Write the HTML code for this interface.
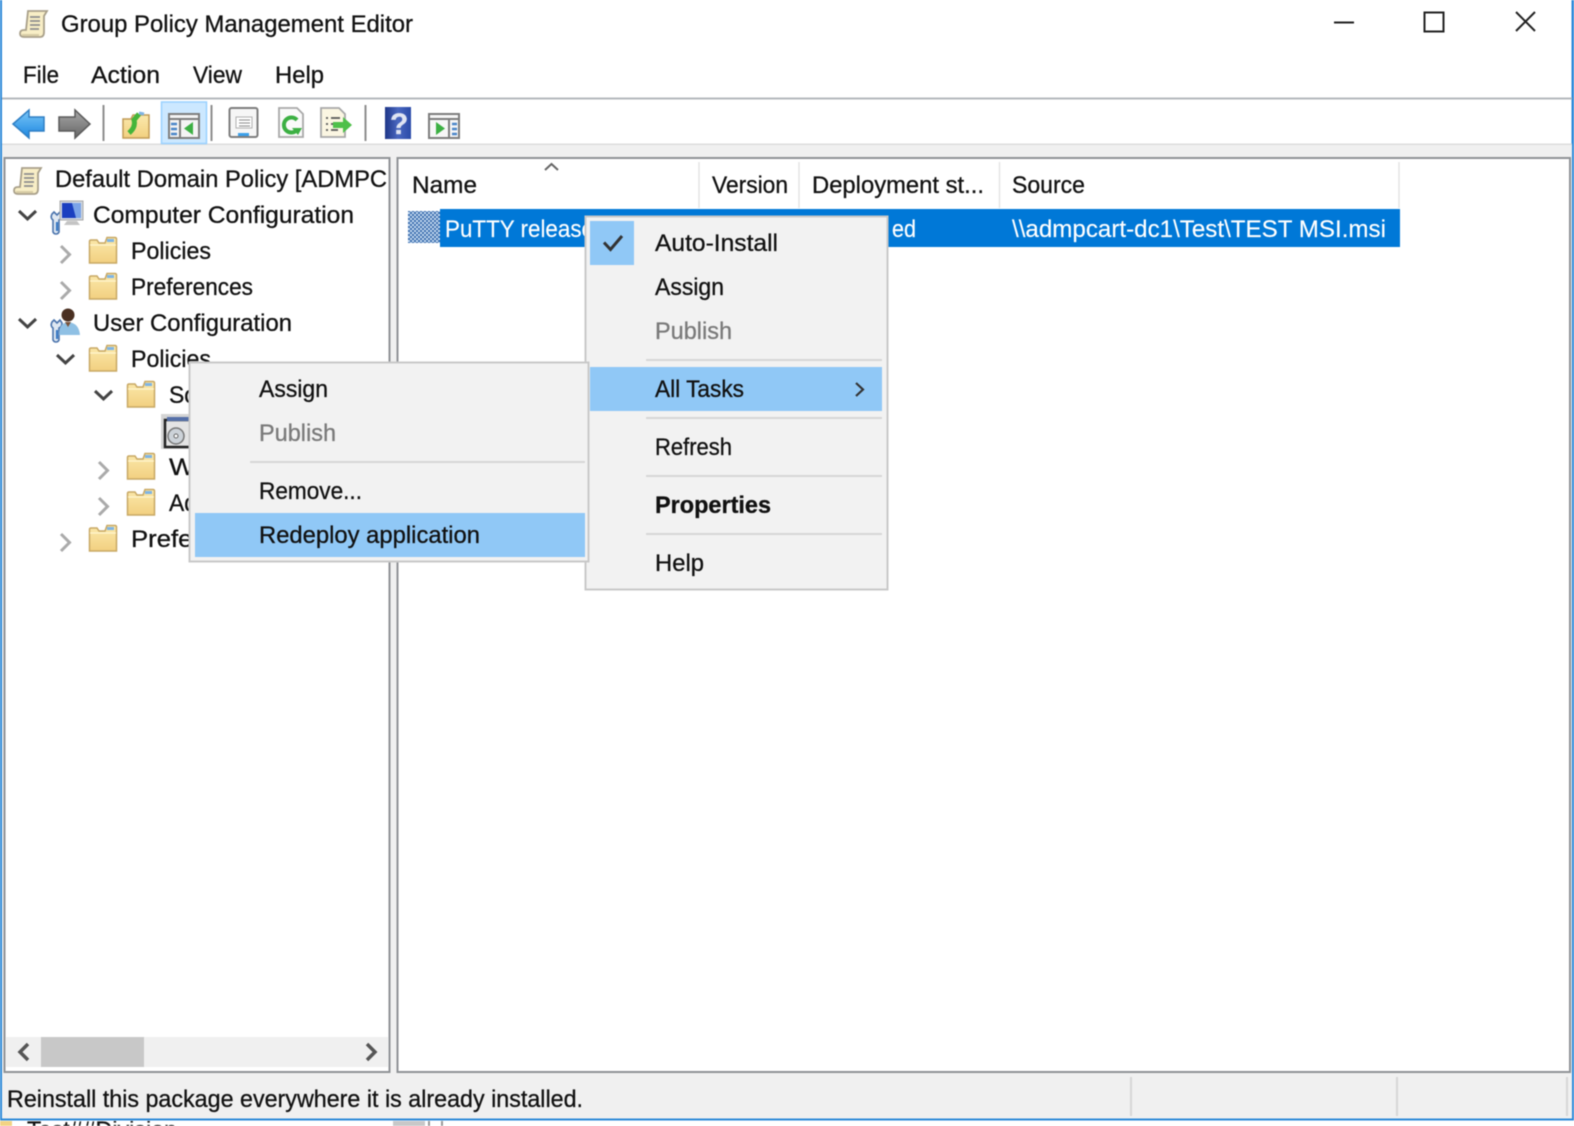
<!DOCTYPE html>
<html lang="en">
<head>
<meta charset="utf-8">
<title>Group Policy Management Editor</title>
<style>
html,body{margin:0;padding:0;background:#fff;width:1574px;height:1126px;overflow:hidden}
svg{display:block;position:absolute;left:0;top:0;filter:blur(.5px)}
svg svg{filter:none}
text{font-family:"Liberation Sans",sans-serif;font-size:24.5px;fill:#111;stroke:#111;stroke-width:.3px}
.g{fill:#7a7a7a;stroke:#7a7a7a}.w{fill:#fff;stroke:#fff;stroke-width:.15px}.b{font-weight:bold}
</style>
</head>
<body>
<svg width="1574" height="1126" viewBox="0 0 1574 1126" xmlns="http://www.w3.org/2000/svg">
<defs>
<linearGradient id="fg" x1="0" y1="0" x2="0" y2="1"><stop offset="0" stop-color="#fbe9ac"/><stop offset="1" stop-color="#f2d080"/></linearGradient>
<linearGradient id="ba" x1="0" y1="0" x2="0" y2="1"><stop offset="0" stop-color="#7cc8f8"/><stop offset="1" stop-color="#1b86e0"/></linearGradient>
<linearGradient id="fa" x1="0" y1="0" x2="0" y2="1"><stop offset="0" stop-color="#a8a8a8"/><stop offset="1" stop-color="#666"/></linearGradient>
<linearGradient id="hp" x1="0" y1="0" x2="1" y2="0"><stop offset="0" stop-color="#1e3688"/><stop offset=".5" stop-color="#4a68c0"/><stop offset="1" stop-color="#2a4aa8"/></linearGradient>
<pattern id="dth" width="4" height="4" patternUnits="userSpaceOnUse"><rect width="4" height="4" fill="#3a6cae"/><circle cx="1" cy="1" r="1.100" fill="#cfe2f5"/><circle cx="3" cy="3" r="1.100" fill="#cfe2f5"/></pattern>
<g id="folder">
<path d="M1.500 27V5.500q0-1.500 1.500-1.500H9l2 3H17l2-5.500h8q1.500 0 1.500 1.500V27z" fill="url(#fg)" stroke="#c8a864" stroke-width="1.500"/>
<rect x="19" y="3" width="7" height="3" fill="#7fb4e4"/>
<path d="M2 9H28" stroke="#fff6d0" stroke-width="1.200"/>
</g>
<g id="scroll">
<path d="M9 3H28l-3 5V24q0 5-4 5H5q-4 0-4-3.500t4-3.500H7z" fill="#f8eec6" stroke="#a9a08a" stroke-width="1.800"/>
<path d="M11 9H21M11 13H21M11 17H21M11 21H20" stroke="#8d8d8d" stroke-width="1.700"/>
<path d="M3 27H20" stroke="#d8cda6" stroke-width="2"/>
</g>
<g id="wrench">
<path d="M2 5l3 3 3-3 2 3q0 4-3 5V25q-1 2-3 2t-3-2V13q-3-2-1-6z" fill="#dfe8f2" stroke="#4b74ad" stroke-width="1.600"/>
<path d="M5 15V24" stroke="#3878c4" stroke-width="2.200"/>
</g>
<path id="chevD" d="M0 0L8.500 8L17 0" fill="none" stroke="#444" stroke-width="3"/>
<path id="chevR" d="M0 0L8.500 8.500L0 17" fill="none" stroke="#aaa" stroke-width="3"/>
</defs>

<!-- window frame -->
<rect width="1574" height="1126" fill="#fff"/>
<rect x="0" y="0" width="2" height="1120" fill="#2b88d8"/>
<rect x="1571.500" y="0" width="2.500" height="1120" fill="#2b88d8"/>

<!-- title bar -->
<use href="#scroll" transform="translate(19,8)"/>
<text x="61" y="32" textLength="352" lengthAdjust="spacingAndGlyphs">Group Policy Management Editor</text>
<path d="M1334 22.500H1354" stroke="#222" stroke-width="2"/>
<rect x="1424.500" y="12.500" width="19" height="19" fill="none" stroke="#222" stroke-width="2"/>
<path d="M1516 12L1535 31M1535 12L1516 31" stroke="#222" stroke-width="2"/>

<!-- menu -->
<text x="23" y="83" textLength="36" lengthAdjust="spacingAndGlyphs">File</text>
<text x="91" y="83" textLength="69" lengthAdjust="spacingAndGlyphs">Action</text>
<text x="193" y="83" textLength="49" lengthAdjust="spacingAndGlyphs">View</text>
<text x="275" y="83" textLength="49" lengthAdjust="spacingAndGlyphs">Help</text>
<rect x="2" y="97.500" width="1570" height="2" fill="#b4b8bc"/>

<!-- toolbar -->
<rect x="2" y="143.500" width="1570" height="1.500" fill="#dcdcdc"/>
<rect x="2" y="145" width="1570" height="13" fill="#f0f0f0"/>
<path d="M13 124L29 110V117H44V131H29V138z" fill="url(#ba)" stroke="#2f7fc4" stroke-width="1.500"/>
<path d="M90 124L75 110V117H59V131H75V138z" fill="url(#fa)" stroke="#5a5a5a" stroke-width="1.500"/>
<rect x="102.500" y="105" width="2" height="36" fill="#8e8e8e"/>
<path d="M123 138V119h8l2-4h16V138z" fill="url(#fg)" stroke="#c29b56" stroke-width="1.500"/>
<path d="M129 133Q136 127 134 120L139 114" fill="none" stroke="#45b53a" stroke-width="5"/>
<path d="M144 114l-5-1" stroke="#7fb4e4" stroke-width="3"/>
<rect x="161.500" y="102" width="45" height="41.500" fill="#cce8ff" stroke="#99d1ff" stroke-width="1.500"/>
<g fill="none" stroke="#7d7d7d" stroke-width="2">
<rect x="169" y="114" width="30" height="24" fill="#f4f4f4"/>
<path d="M169 119H199M180 119V138"/>
</g>
<path d="M193 122V135L184 128.500z" fill="#3cb043"/>
<path d="M171 124h6M171 129h6M171 134h6" stroke="#4a86c8" stroke-width="2.500"/>
<rect x="210.500" y="105" width="2" height="36" fill="#8e8e8e"/>
<rect x="229.500" y="108" width="28" height="29" rx="2" fill="#f6f6f6" stroke="#7d7d7d" stroke-width="2"/>
<rect x="236" y="117" width="16" height="11" fill="#fff" stroke="#b0b0b0"/>
<path d="M239 120h11M239 123h11M239 126h11" stroke="#8a8a8a"/>
<rect x="238" y="133" width="11" height="3" fill="#3ba0ea"/>
<path d="M279 108H297L303 114V137H279z" fill="#fafafa" stroke="#a8a8a8" stroke-width="1.800"/>
<path d="M297 130a7.500 7.500 0 1 1 0-10" fill="none" stroke="#3cb043" stroke-width="4"/>
<path d="M292 128h10l-4 7z" fill="#3cb043"/>
<path d="M321 108H339L345 114V137H321z" fill="#fbf6e2" stroke="#a8a8a8" stroke-width="1.800"/>
<path d="M326 118h2M331 118h9M326 124h2M331 124h8M326 130h2M331 130h7" stroke="#555" stroke-width="1.800"/>
<path d="M333 122H343V117L352 125L343 133V128H333z" fill="#4fc04a"/>
<rect x="364.500" y="105" width="2" height="36" fill="#8e8e8e"/>
<rect x="385" y="107" width="26" height="32" fill="url(#hp)"/>
<text x="390" y="134" style="font-size:30px;font-weight:bold;fill:#dfe4f2;stroke:#dfe4f2">?</text>
<g fill="none" stroke="#7d7d7d" stroke-width="2">
<rect x="429" y="114" width="30" height="24" fill="#f7f7f7"/>
<path d="M429 119H459M449 119V138"/>
</g>
<path d="M436 122V135L445 128.500z" fill="#3cb043"/>
<path d="M452 124h5M452 129h5M452 134h5" stroke="#4a86c8" stroke-width="2.500"/>

<!-- panes -->
<rect x="2" y="158" width="1570" height="962" fill="#f0f0f0"/>
<rect x="4.500" y="158" width="385" height="914" fill="#fff" stroke="#8f9296" stroke-width="2"/>
<rect x="397.500" y="158" width="1172.500" height="914" fill="#fff" stroke="#8f9296" stroke-width="2"/>

<!-- left tree -->
<use href="#scroll" transform="translate(13,165)"/>
<text x="55" y="187" textLength="332" lengthAdjust="spacingAndGlyphs">Default Domain Policy [ADMPC</text>
<use href="#chevD" transform="translate(19,211)"/>
<g transform="translate(51,201)">
<use href="#wrench" transform="translate(1,6)"/>
<rect x="9" y="0" width="23" height="19" fill="#cfd6df" stroke="#a8a8a8"/>
<path d="M11 2H30V17H11z" fill="#1a3fc0"/>
<path d="M21 2h9v15h-5z" fill="#7ba4e8"/>
<path d="M16 20H26L29 24H13z" fill="#c4c4c4"/>
</g>
<text x="93" y="223" textLength="261" lengthAdjust="spacingAndGlyphs">Computer Configuration</text>
<use href="#chevR" transform="translate(61,246)"/>
<use href="#folder" transform="translate(88,236)"/>
<text x="131" y="259" textLength="80" lengthAdjust="spacingAndGlyphs">Policies</text>
<use href="#chevR" transform="translate(61,282)"/>
<use href="#folder" transform="translate(88,272)"/>
<text x="131" y="295" textLength="122" lengthAdjust="spacingAndGlyphs">Preferences</text>
<use href="#chevD" transform="translate(19,319)"/>
<g transform="translate(52,308)">
<use href="#wrench" transform="translate(0,7)"/>
<circle cx="16" cy="7" r="6.500" fill="#4a3022"/>
<path d="M7 27q0-12 9-13 11 1 12 13z" fill="#8fc0e4"/>
<path d="M13 14h6l-3 5z" fill="#7a5238"/>
</g>
<text x="93" y="331" textLength="199" lengthAdjust="spacingAndGlyphs">User Configuration</text>
<use href="#chevD" transform="translate(57,355)"/>
<use href="#folder" transform="translate(88,344)"/>
<text x="131" y="367" textLength="80" lengthAdjust="spacingAndGlyphs">Policies</text>
<use href="#chevD" transform="translate(95,391)"/>
<use href="#folder" transform="translate(126,380)"/>
<text x="169" y="403" textLength="28" lengthAdjust="spacingAndGlyphs">So</text>
<rect x="161" y="414" width="30" height="35" fill="#d4d4d4"/>
<rect x="165" y="420" width="26" height="27" fill="#e4e4e4" stroke="#222" stroke-width="2.500"/>
<rect x="167" y="417" width="22" height="4" fill="#5570a8"/>
<circle cx="176" cy="436" r="8" fill="#ccd2d8" stroke="#777" stroke-width="1.500"/>
<circle cx="176" cy="436" r="2" fill="#fff" stroke="#666"/>
<use href="#chevR" transform="translate(99,462)"/>
<use href="#folder" transform="translate(126,452)"/>
<text x="169" y="475" textLength="26" lengthAdjust="spacingAndGlyphs">W</text>
<use href="#chevR" transform="translate(99,498)"/>
<use href="#folder" transform="translate(126,488)"/>
<text x="169" y="511" textLength="28" lengthAdjust="spacingAndGlyphs">Ad</text>
<use href="#chevR" transform="translate(61,534)"/>
<use href="#folder" transform="translate(88,524)"/>
<text x="131" y="547" textLength="70" lengthAdjust="spacingAndGlyphs">Prefer</text>

<!-- left scrollbar -->
<rect x="6" y="1037" width="382" height="30" fill="#f0f0f0"/>
<rect x="41" y="1037" width="103" height="30" fill="#c8c8c8"/>
<path d="M28 1044L20 1052L28 1060" fill="none" stroke="#555" stroke-width="3.500"/>
<path d="M367 1044L375 1052L367 1060" fill="none" stroke="#555" stroke-width="3.500"/>

<!-- list header -->
<path d="M545 170L551.500 164L558 170" fill="none" stroke="#666" stroke-width="2"/>
<text x="412" y="193" textLength="65" lengthAdjust="spacingAndGlyphs">Name</text>
<text x="712" y="193" textLength="76" lengthAdjust="spacingAndGlyphs">Version</text>
<text x="812" y="193" textLength="172" lengthAdjust="spacingAndGlyphs">Deployment st...</text>
<text x="1012" y="193" textLength="73" lengthAdjust="spacingAndGlyphs">Source</text>
<path d="M699 162V208M799 162V208M999.500 162V208M1399 162V208" stroke="#e5e5e5" stroke-width="1.500"/>

<!-- selected row -->
<rect x="408" y="211" width="32" height="32" fill="url(#dth)"/>
<rect x="440" y="209" width="960" height="38" fill="#0078d7"/>
<text class="w" x="445" y="237" textLength="149" lengthAdjust="spacingAndGlyphs">PuTTY release</text>
<text class="w" x="892" y="237" textLength="24" lengthAdjust="spacingAndGlyphs">ed</text>
<text class="w" x="1012" y="237" textLength="374" lengthAdjust="spacingAndGlyphs">\\admpcart-dc1\Test\TEST MSI.msi</text>

<!-- context menu 1 -->
<rect x="585.500" y="216.500" width="302" height="373" fill="#f2f2f2" stroke="#c9c9c9" stroke-width="2"/>
<rect x="590" y="221" width="44" height="44" fill="#90c8f6"/>
<path d="M604 242.500L610.500 249.500L622 236" fill="none" stroke="#333" stroke-width="3"/>
<text x="655" y="251" textLength="123" lengthAdjust="spacingAndGlyphs">Auto-Install</text>
<text x="655" y="295" textLength="69" lengthAdjust="spacingAndGlyphs">Assign</text>
<text class="g" x="655" y="339" textLength="77" lengthAdjust="spacingAndGlyphs">Publish</text>
<rect x="646" y="359" width="236" height="2" fill="#d7d7d7"/>
<rect x="590" y="367" width="292" height="44" fill="#90c8f6"/>
<text x="655" y="397" textLength="89" lengthAdjust="spacingAndGlyphs">All Tasks</text>
<path d="M856 383L863 389.500L856 396" fill="none" stroke="#333" stroke-width="2.200"/>
<rect x="646" y="417" width="236" height="2" fill="#d7d7d7"/>
<text x="655" y="455" textLength="77" lengthAdjust="spacingAndGlyphs">Refresh</text>
<rect x="646" y="475" width="236" height="2" fill="#d7d7d7"/>
<text class="b" x="655" y="513" textLength="116" lengthAdjust="spacingAndGlyphs">Properties</text>
<rect x="646" y="533" width="236" height="2" fill="#d7d7d7"/>
<text x="655" y="571" textLength="49" lengthAdjust="spacingAndGlyphs">Help</text>

<!-- context menu 2 -->
<rect x="189.500" y="362.500" width="399" height="199" fill="#f2f2f2" stroke="#c9c9c9" stroke-width="2"/>
<text x="259" y="397" textLength="69" lengthAdjust="spacingAndGlyphs">Assign</text>
<text class="g" x="259" y="441" textLength="77" lengthAdjust="spacingAndGlyphs">Publish</text>
<rect x="250" y="461" width="335" height="2" fill="#d7d7d7"/>
<text x="259" y="499" textLength="103" lengthAdjust="spacingAndGlyphs">Remove...</text>
<rect x="195" y="513" width="390" height="44" fill="#90c8f6"/>
<text x="259" y="543" textLength="221" lengthAdjust="spacingAndGlyphs">Redeploy application</text>

<!-- status bar -->
<text x="7" y="1107" textLength="576" lengthAdjust="spacingAndGlyphs">Reinstall this package everywhere it is already installed.</text>
<path d="M1131 1077V1116M1397 1077V1116M1567 1077V1116" stroke="#d6d6d6" stroke-width="2"/>
<rect x="0" y="1118.500" width="1574" height="2" fill="#2b88d8"/>

<!-- behind window -->
<svg x="0" y="1121" width="1574" height="5">
<text x="27" y="17" textLength="150" lengthAdjust="spacingAndGlyphs">Test##Division</text>
<rect x="0" y="0" width="12" height="5" fill="#f3d384"/>
<rect x="393" y="0" width="32" height="5" fill="#c8c8c8"/>
<rect x="428" y="0" width="2" height="5" fill="#999"/>
<rect x="441" y="0" width="2" height="5" fill="#999"/>
</svg>
</svg>
</body>
</html>
